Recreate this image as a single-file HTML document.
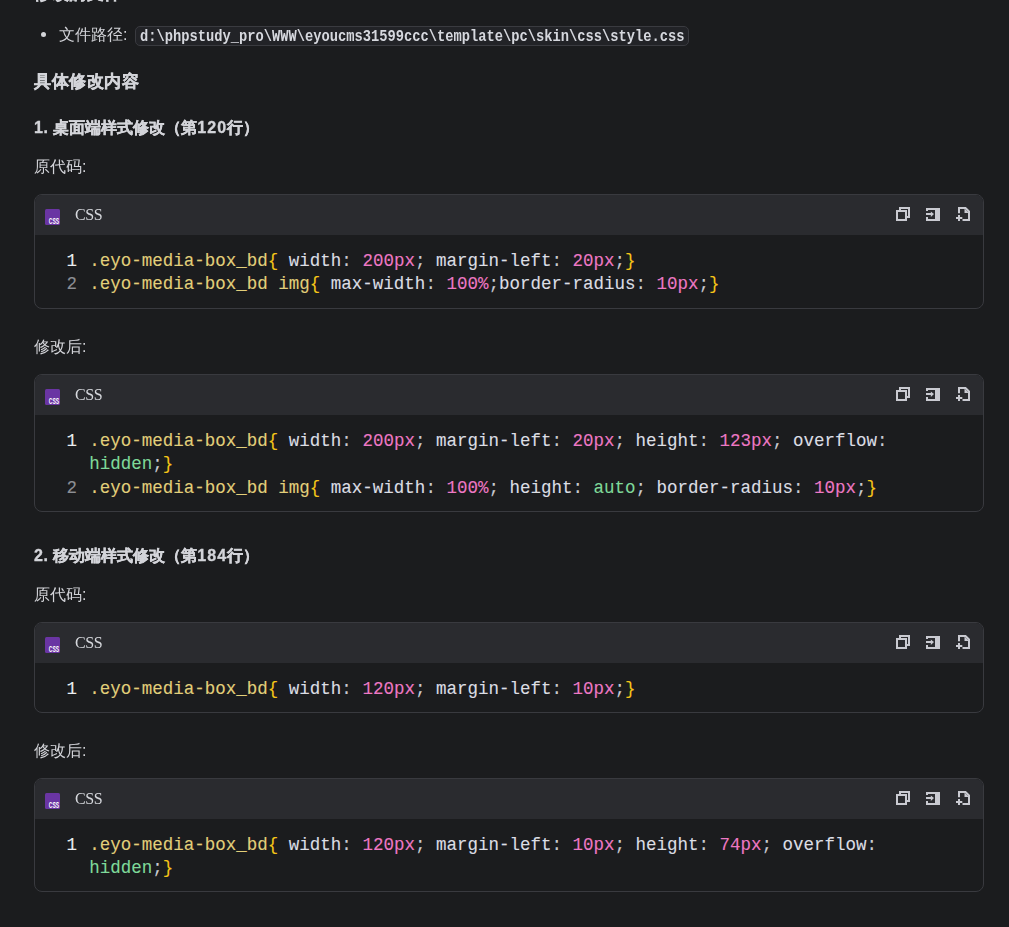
<!DOCTYPE html>
<html><head><meta charset="utf-8">
<style>
html,body{margin:0;padding:0;}
body{width:1009px;height:927px;overflow:hidden;background:#1b1c1e;color:#d3d4d9;font-family:"Liberation Sans",sans-serif;position:relative;}
.abs{position:absolute;white-space:nowrap;will-change:transform;}
.h3{font-weight:bold;font-size:17px;letter-spacing:0.5px;-webkit-text-stroke:0.4px #d3d4d9;}
.n1{letter-spacing:0.7px;}
.dg{letter-spacing:1.1px;}
.h4{font-weight:bold;font-size:16px;-webkit-text-stroke:0.35px #d3d4d9;}
.p{font-size:16px;}
.ic{font-family:"Liberation Mono",monospace;font-size:13.75px;line-height:18px;height:18px;width:544.25px;background:#222327;border:1px solid #3a3b40;border-radius:5px;padding:0 4px;font-weight:bold;color:#d6d8de;}
.cb{position:absolute;left:34px;width:948px;border:1px solid #393a3f;border-radius:8px;background:#1b1c1e;overflow:hidden;}
.cb .hd{height:40px;background:#2a2b2f;position:relative;}
.cb .bd{position:relative;font-family:"Liberation Mono",monospace;font-size:17.5px;line-height:23.4px;white-space:pre;-webkit-text-stroke-width:0.1px;}
.ln{position:absolute;left:31.5px;color:#8c8e94;transform:scaleY(1.1);transform-origin:0 16.4px;}
.ln.a{color:#eceef2;}
.cl{position:absolute;left:54.3px;transform:scaleY(1.1);transform-origin:0 16.4px;}
.sel{color:#e2cf7a;}
.br{color:#f5c518;}
.pr{color:#dcdee4;}
.nu{color:#ed78c4;}
.kw{color:#7fd99a;}
.pu{color:#c8cad0;}
.lang{position:absolute;left:40px;top:11px;font-family:"Liberation Serif",serif;font-size:16px;letter-spacing:-0.4px;color:#d6d8dd;will-change:transform;}
.cssic{position:absolute;left:10px;top:14px;}
.icons{position:absolute;left:845px;top:0;}
</style></head><body>
<div class="abs h3" style="left:34px;top:-18.5px;">修改的文件</div>
<div class="abs" style="left:41.3px;top:32px;width:5px;height:5px;border-radius:50%;background:#d3d4d9;"></div>
<div class="abs p" style="left:59px;top:25px;">文件路径:</div>
<div class="abs ic" style="left:134.8px;top:26px;"><span style="position:relative;top:2.2px;display:inline-block;transform:scaleY(1.15);transform-origin:0 12.6px;">d:\phpstudy_pro\WWW\eyoucms31599ccc\template\pc\skin\css\style.css</span></div>
<div class="abs h3" style="left:34px;top:70px;">具体修改内容</div>
<div class="abs h4" style="left:34px;top:118.3px;"><span class="n1">1.</span> 桌面端样式修改（第<span class="dg">120</span>行）</div>
<div class="abs p" style="left:34px;top:157px;">原代码:</div>
<div class="cb" style="top:194px;height:113px;">
<div class="hd"><svg class="cssic" width="15" height="16" viewBox="0 0 15 16"><rect x="0" y="0" width="15" height="16" rx="1.5" fill="#6a35a3"/><text x="3.8" y="15" textLength="10.3" lengthAdjust="spacingAndGlyphs" font-family="Liberation Sans" font-weight="bold" font-size="8.3" fill="#fff">CSS</text></svg><div class="lang">CSS</div><svg class="icons" width="100" height="40" viewBox="0 0 100 40">
<g fill="none" stroke="#c9cad1" stroke-width="2">
<rect x="17" y="16" width="9" height="9"/>
<path d="M20 15V13H29V22H27"/>
</g>
<g fill="#c9cad1">
<rect x="46" y="13" width="14" height="2"/>
<rect x="46" y="24" width="14" height="2"/>
<rect x="46" y="13" width="2" height="3"/>
<rect x="46" y="22" width="2" height="4"/>
<rect x="55" y="13" width="5" height="13"/>
<rect x="46" y="18" width="5.5" height="2"/>
<polygon points="50.8,16.6 54,19 50.8,21.9"/>
</g>
<path d="M79 18.2V13H85.5L89 16.5V25H82.5" fill="none" stroke="#c9cad1" stroke-width="2"/>
<polygon points="84.5,13.5 84.5,18 89,18" fill="#c9cad1"/>
<g fill="#c9cad1">
<rect x="76" y="22" width="6.3" height="2"/>
<rect x="78" y="20" width="2" height="6"/>
</g>
</svg></div>
<div class="bd" style="height:73px;">
<div class="ln a" style="top:15.00px;">1</div>
<div class="cl" style="top:15.00px;"><span class="sel">.eyo-media-box_bd</span><span class="br">{</span><span class="pr"> width</span><span class="pu">: </span><span class="nu">200px</span><span class="pu">; </span><span class="pr">margin-left</span><span class="pu">: </span><span class="nu">20px</span><span class="pu">;</span><span class="br">}</span></div>
<div class="ln" style="top:38.40px;">2</div>
<div class="cl" style="top:38.40px;"><span class="sel">.eyo-media-box_bd img</span><span class="br">{</span><span class="pr"> max-width</span><span class="pu">: </span><span class="nu">100%</span><span class="pu">;</span><span class="pr">border-radius</span><span class="pu">: </span><span class="nu">10px</span><span class="pu">;</span><span class="br">}</span></div>
</div></div>
<div class="abs p" style="left:34px;top:337px;">修改后:</div>
<div class="cb" style="top:374px;height:136px;">
<div class="hd"><svg class="cssic" width="15" height="16" viewBox="0 0 15 16"><rect x="0" y="0" width="15" height="16" rx="1.5" fill="#6a35a3"/><text x="3.8" y="15" textLength="10.3" lengthAdjust="spacingAndGlyphs" font-family="Liberation Sans" font-weight="bold" font-size="8.3" fill="#fff">CSS</text></svg><div class="lang">CSS</div><svg class="icons" width="100" height="40" viewBox="0 0 100 40">
<g fill="none" stroke="#c9cad1" stroke-width="2">
<rect x="17" y="16" width="9" height="9"/>
<path d="M20 15V13H29V22H27"/>
</g>
<g fill="#c9cad1">
<rect x="46" y="13" width="14" height="2"/>
<rect x="46" y="24" width="14" height="2"/>
<rect x="46" y="13" width="2" height="3"/>
<rect x="46" y="22" width="2" height="4"/>
<rect x="55" y="13" width="5" height="13"/>
<rect x="46" y="18" width="5.5" height="2"/>
<polygon points="50.8,16.6 54,19 50.8,21.9"/>
</g>
<path d="M79 18.2V13H85.5L89 16.5V25H82.5" fill="none" stroke="#c9cad1" stroke-width="2"/>
<polygon points="84.5,13.5 84.5,18 89,18" fill="#c9cad1"/>
<g fill="#c9cad1">
<rect x="76" y="22" width="6.3" height="2"/>
<rect x="78" y="20" width="2" height="6"/>
</g>
</svg></div>
<div class="bd" style="height:96px;">
<div class="ln a" style="top:15.00px;">1</div>
<div class="cl" style="top:15.00px;"><span class="sel">.eyo-media-box_bd</span><span class="br">{</span><span class="pr"> width</span><span class="pu">: </span><span class="nu">200px</span><span class="pu">; </span><span class="pr">margin-left</span><span class="pu">: </span><span class="nu">20px</span><span class="pu">; </span><span class="pr">height</span><span class="pu">: </span><span class="nu">123px</span><span class="pu">; </span><span class="pr">overflow</span><span class="pu">:</span></div>
<div class="cl" style="top:38.40px;"><span class="kw">hidden</span><span class="pu">;</span><span class="br">}</span></div>
<div class="ln" style="top:61.80px;">2</div>
<div class="cl" style="top:61.80px;"><span class="sel">.eyo-media-box_bd img</span><span class="br">{</span><span class="pr"> max-width</span><span class="pu">: </span><span class="nu">100%</span><span class="pu">; </span><span class="pr">height</span><span class="pu">: </span><span class="kw">auto</span><span class="pu">; </span><span class="pr">border-radius</span><span class="pu">: </span><span class="nu">10px</span><span class="pu">;</span><span class="br">}</span></div>
</div></div>
<div class="abs h4" style="left:34px;top:545.8px;"><span class="n1">2.</span> 移动端样式修改（第<span class="dg">184</span>行）</div>
<div class="abs p" style="left:34px;top:585px;">原代码:</div>
<div class="cb" style="top:622px;height:89px;">
<div class="hd"><svg class="cssic" width="15" height="16" viewBox="0 0 15 16"><rect x="0" y="0" width="15" height="16" rx="1.5" fill="#6a35a3"/><text x="3.8" y="15" textLength="10.3" lengthAdjust="spacingAndGlyphs" font-family="Liberation Sans" font-weight="bold" font-size="8.3" fill="#fff">CSS</text></svg><div class="lang">CSS</div><svg class="icons" width="100" height="40" viewBox="0 0 100 40">
<g fill="none" stroke="#c9cad1" stroke-width="2">
<rect x="17" y="16" width="9" height="9"/>
<path d="M20 15V13H29V22H27"/>
</g>
<g fill="#c9cad1">
<rect x="46" y="13" width="14" height="2"/>
<rect x="46" y="24" width="14" height="2"/>
<rect x="46" y="13" width="2" height="3"/>
<rect x="46" y="22" width="2" height="4"/>
<rect x="55" y="13" width="5" height="13"/>
<rect x="46" y="18" width="5.5" height="2"/>
<polygon points="50.8,16.6 54,19 50.8,21.9"/>
</g>
<path d="M79 18.2V13H85.5L89 16.5V25H82.5" fill="none" stroke="#c9cad1" stroke-width="2"/>
<polygon points="84.5,13.5 84.5,18 89,18" fill="#c9cad1"/>
<g fill="#c9cad1">
<rect x="76" y="22" width="6.3" height="2"/>
<rect x="78" y="20" width="2" height="6"/>
</g>
</svg></div>
<div class="bd" style="height:49px;">
<div class="ln a" style="top:15.00px;">1</div>
<div class="cl" style="top:15.00px;"><span class="sel">.eyo-media-box_bd</span><span class="br">{</span><span class="pr"> width</span><span class="pu">: </span><span class="nu">120px</span><span class="pu">; </span><span class="pr">margin-left</span><span class="pu">: </span><span class="nu">10px</span><span class="pu">;</span><span class="br">}</span></div>
</div></div>
<div class="abs p" style="left:34px;top:741px;">修改后:</div>
<div class="cb" style="top:778px;height:112px;">
<div class="hd"><svg class="cssic" width="15" height="16" viewBox="0 0 15 16"><rect x="0" y="0" width="15" height="16" rx="1.5" fill="#6a35a3"/><text x="3.8" y="15" textLength="10.3" lengthAdjust="spacingAndGlyphs" font-family="Liberation Sans" font-weight="bold" font-size="8.3" fill="#fff">CSS</text></svg><div class="lang">CSS</div><svg class="icons" width="100" height="40" viewBox="0 0 100 40">
<g fill="none" stroke="#c9cad1" stroke-width="2">
<rect x="17" y="16" width="9" height="9"/>
<path d="M20 15V13H29V22H27"/>
</g>
<g fill="#c9cad1">
<rect x="46" y="13" width="14" height="2"/>
<rect x="46" y="24" width="14" height="2"/>
<rect x="46" y="13" width="2" height="3"/>
<rect x="46" y="22" width="2" height="4"/>
<rect x="55" y="13" width="5" height="13"/>
<rect x="46" y="18" width="5.5" height="2"/>
<polygon points="50.8,16.6 54,19 50.8,21.9"/>
</g>
<path d="M79 18.2V13H85.5L89 16.5V25H82.5" fill="none" stroke="#c9cad1" stroke-width="2"/>
<polygon points="84.5,13.5 84.5,18 89,18" fill="#c9cad1"/>
<g fill="#c9cad1">
<rect x="76" y="22" width="6.3" height="2"/>
<rect x="78" y="20" width="2" height="6"/>
</g>
</svg></div>
<div class="bd" style="height:72px;">
<div class="ln a" style="top:15.00px;">1</div>
<div class="cl" style="top:15.00px;"><span class="sel">.eyo-media-box_bd</span><span class="br">{</span><span class="pr"> width</span><span class="pu">: </span><span class="nu">120px</span><span class="pu">; </span><span class="pr">margin-left</span><span class="pu">: </span><span class="nu">10px</span><span class="pu">; </span><span class="pr">height</span><span class="pu">: </span><span class="nu">74px</span><span class="pu">; </span><span class="pr">overflow</span><span class="pu">:</span></div>
<div class="cl" style="top:38.40px;"><span class="kw">hidden</span><span class="pu">;</span><span class="br">}</span></div>
</div></div>
</body></html>
